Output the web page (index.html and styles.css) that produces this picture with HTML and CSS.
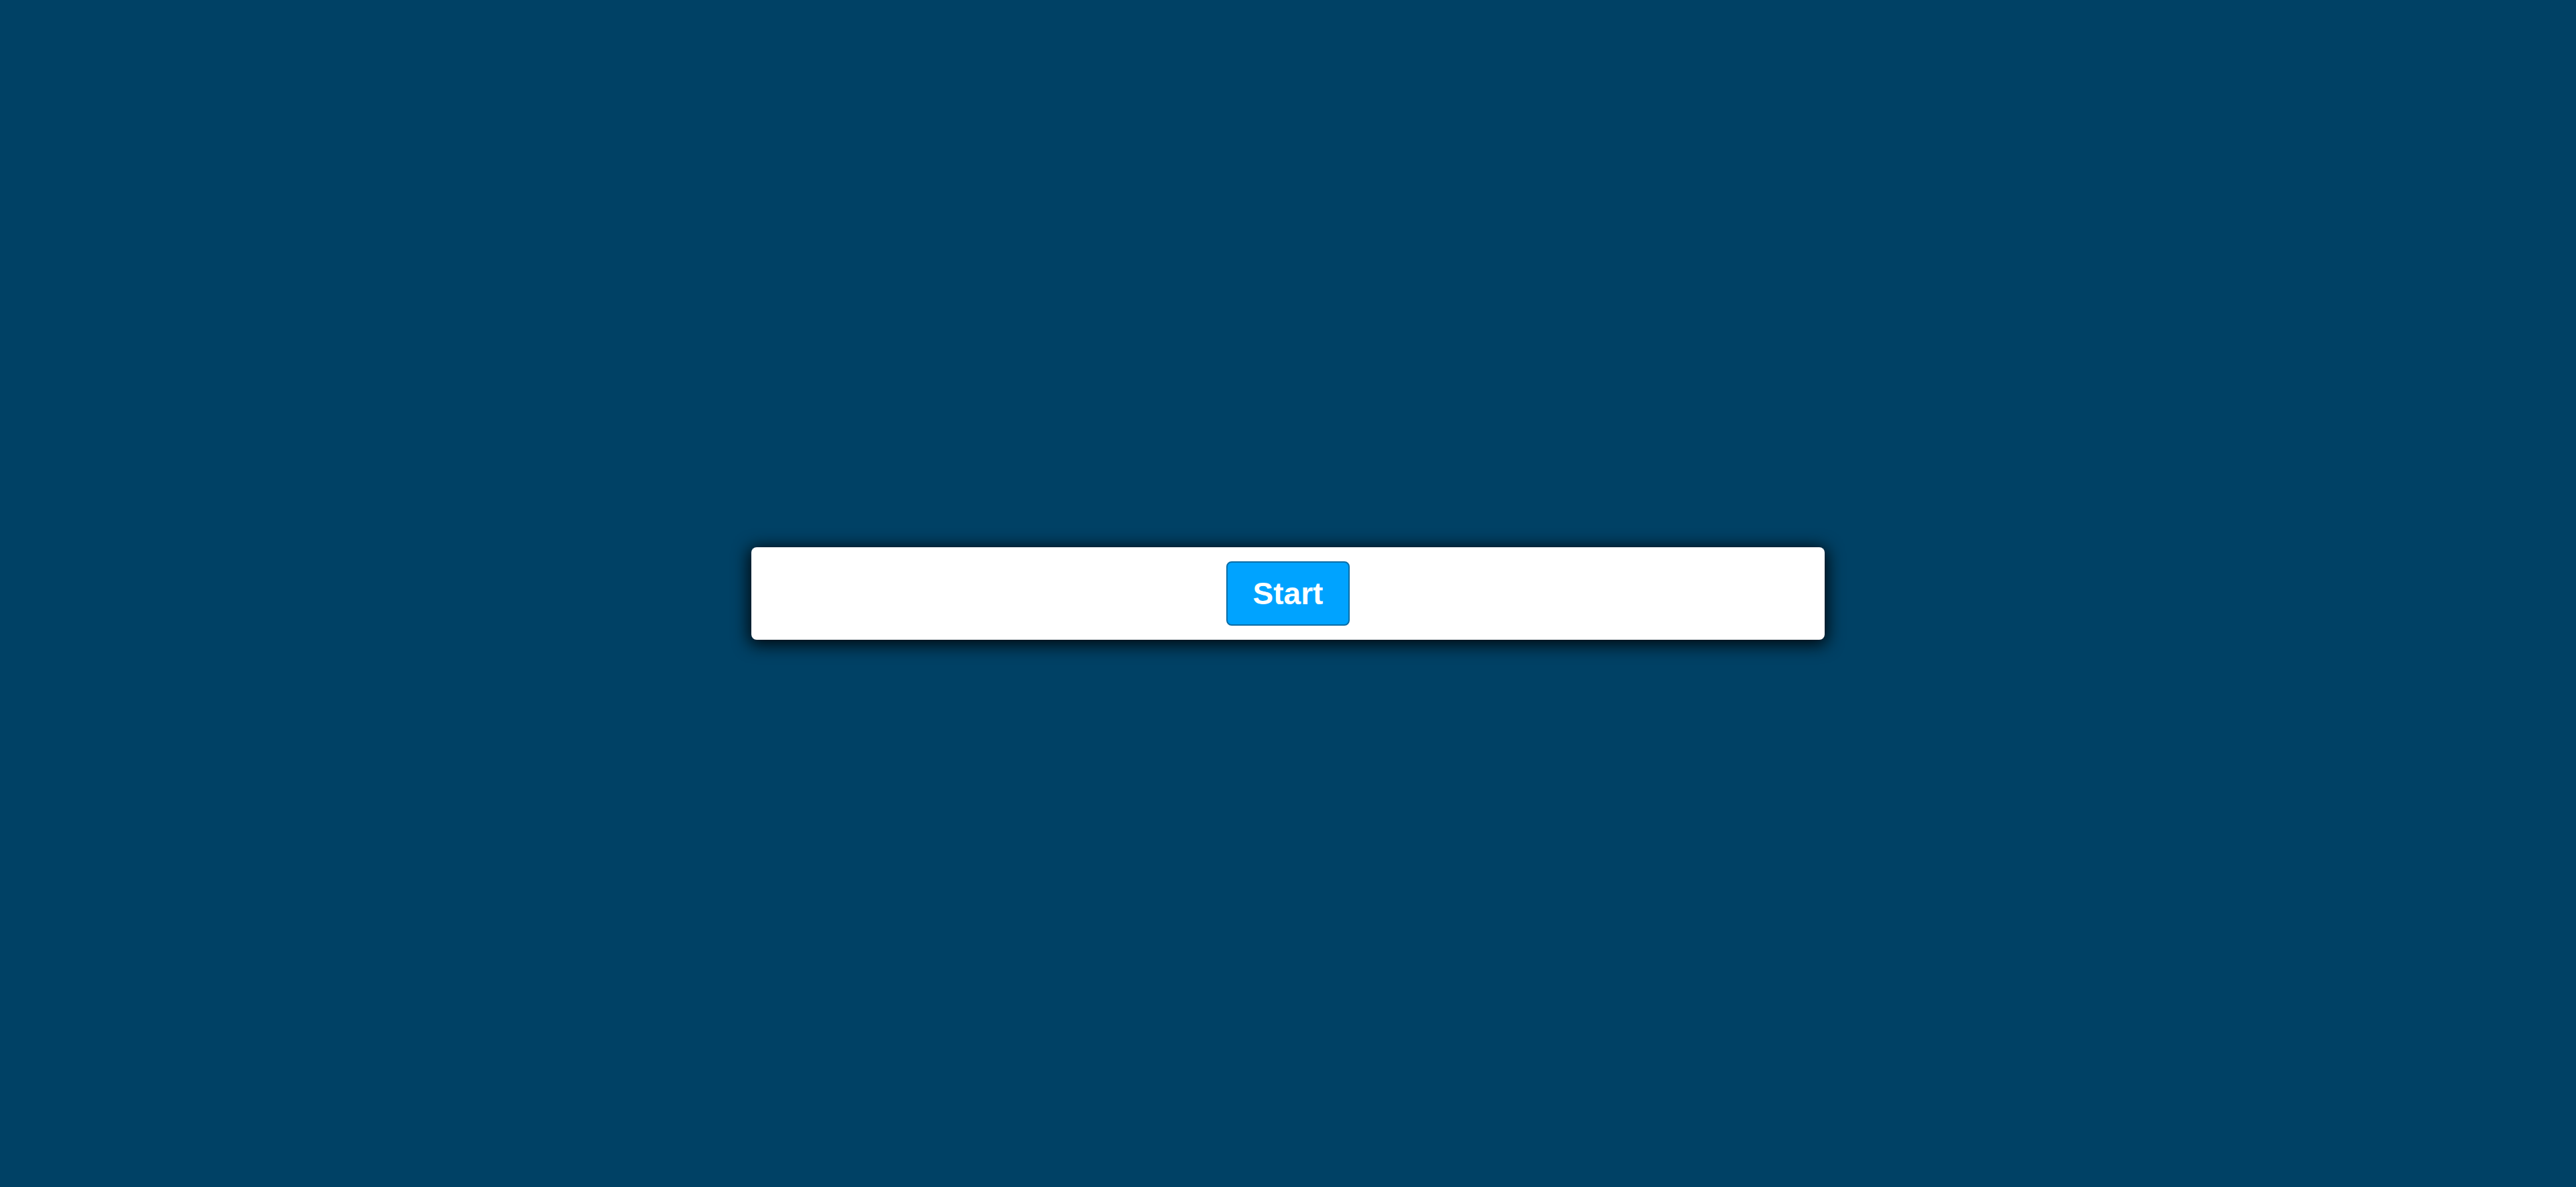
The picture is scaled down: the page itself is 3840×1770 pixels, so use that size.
FILE: index.html
```html
<!DOCTYPE html>
<html>
<head>
<meta charset="utf-8">
<link rel="stylesheet" href="styles.css">
</head>
<body>
<div class="stage">
  <div class="card">
    <button class="start">Start</button>
  </div>
</div>
</body>
</html>
```
FILE: styles.css
```css
html, body {
  margin: 0;
  padding: 0;
  height: 100%;
}
body {
  background: #004165;
  font-family: "Liberation Sans", Arial, sans-serif;
}
.stage {
  height: 100%;
  display: flex;
  align-items: center;
  justify-content: center;
}
.card {
  width: 1600px;
  height: 138px;
  box-sizing: border-box;
  background: #ffffff;
  border-radius: 8px;
  box-shadow: 0 4px 24px 4px rgba(0, 0, 0, 0.85);
  display: flex;
  align-items: center;
  justify-content: center;
}
.start {
  width: 184px;
  height: 96px;
  box-sizing: border-box;
  background: #00a3ff;
  border: 2px solid #0a6da6;
  border-radius: 8px;
  color: #ffffff;
  font-family: "Liberation Sans", Arial, sans-serif;
  font-weight: bold;
  font-size: 46px;
  padding: 0;
  cursor: pointer;
}
```
